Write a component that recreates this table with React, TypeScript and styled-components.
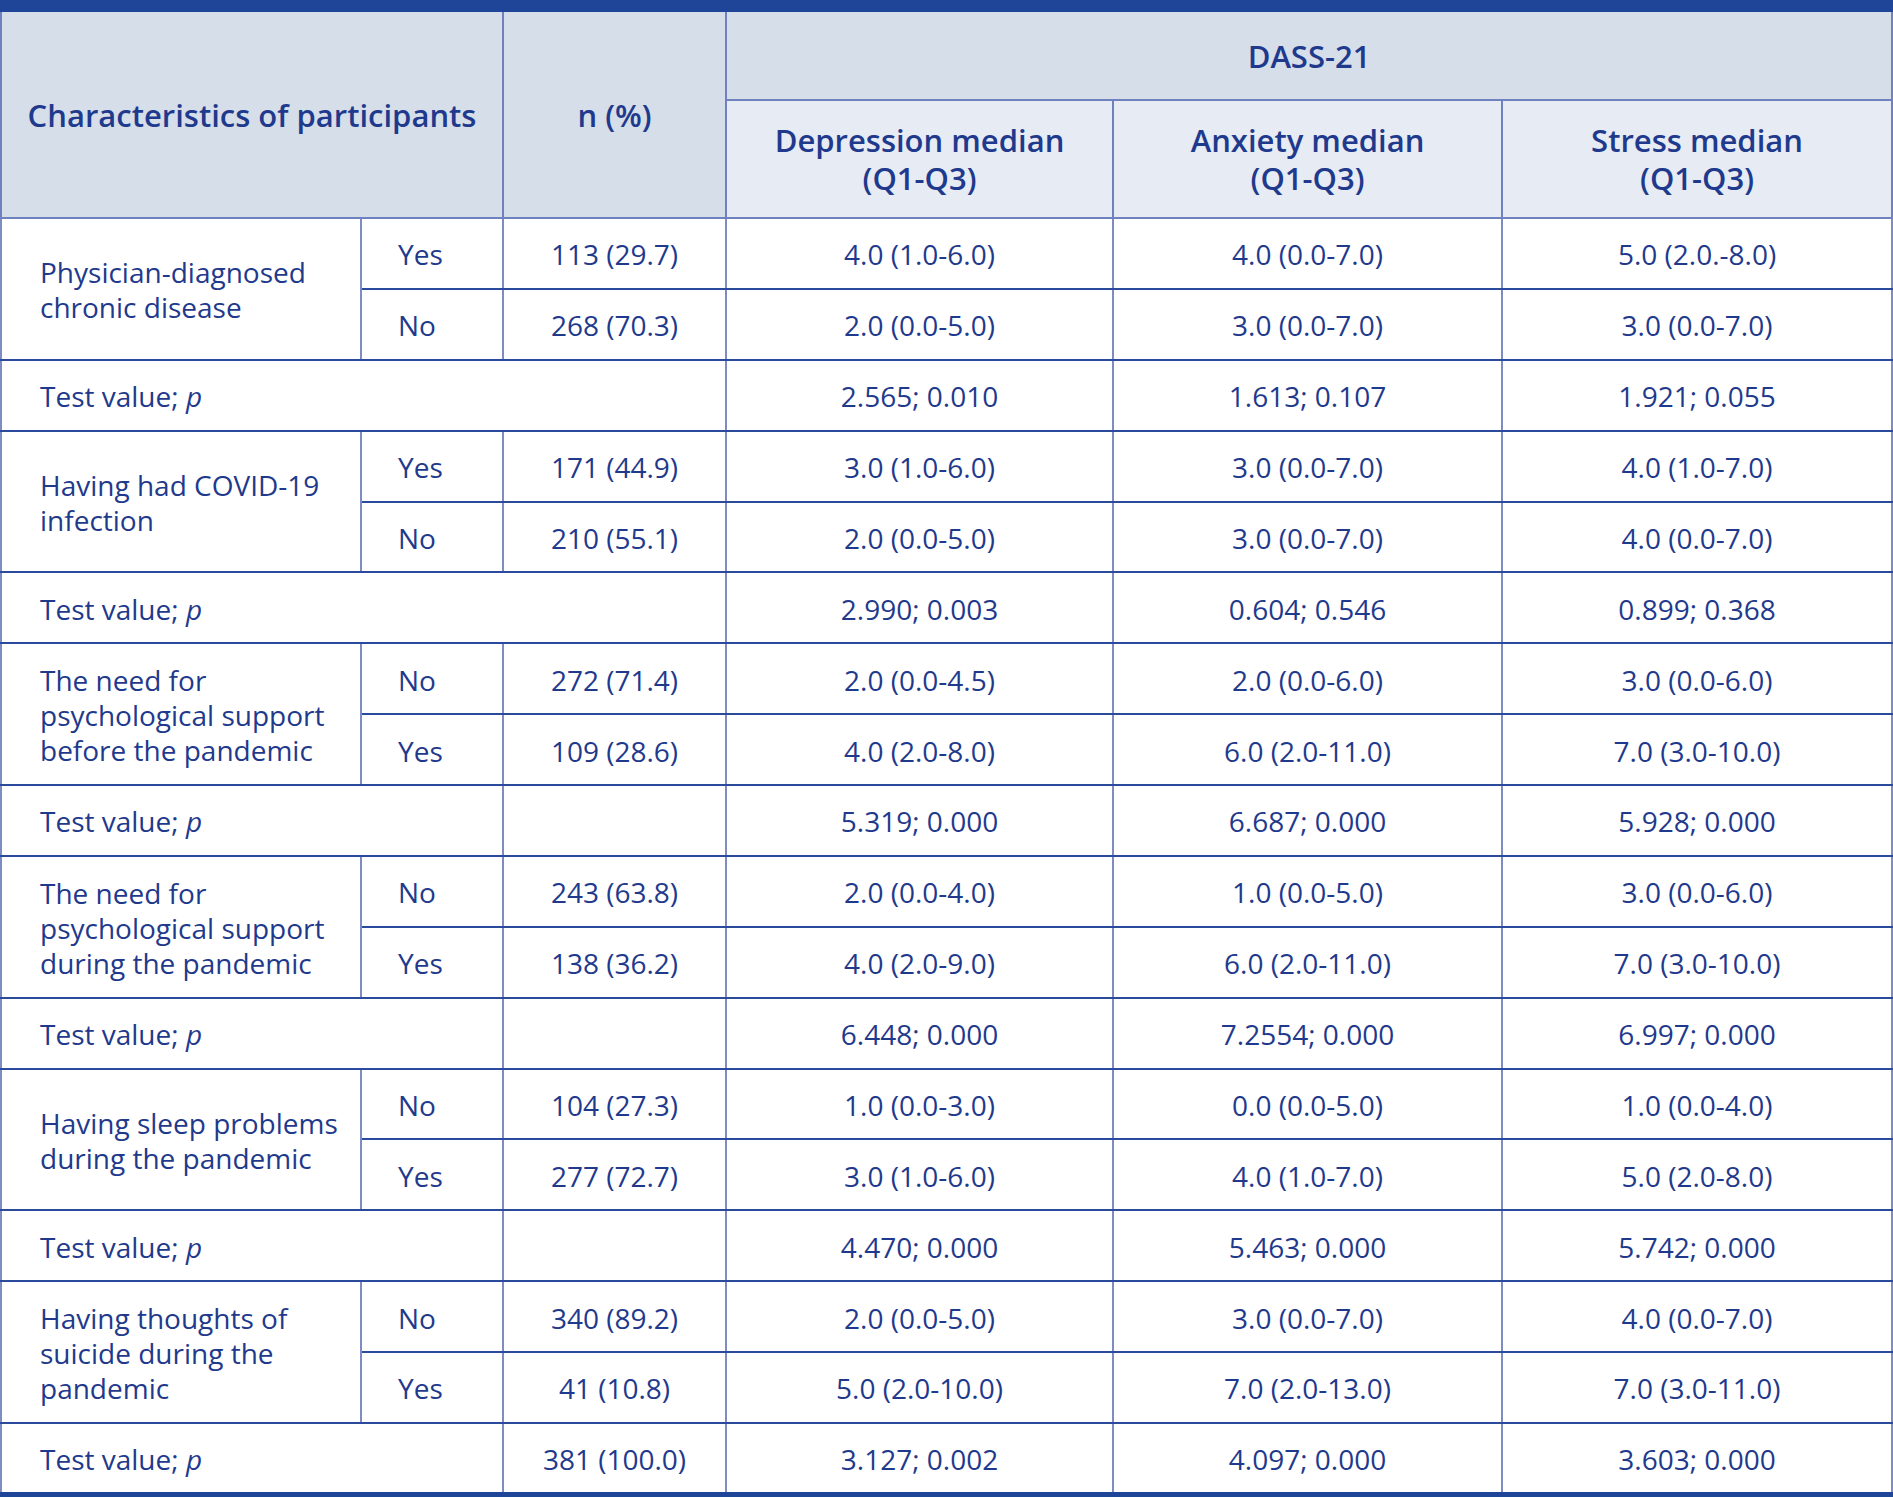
import React from "react";
import styled, { createGlobalStyle } from "styled-components";

const Global = createGlobalStyle`
  html, body { margin: 0; padding: 0; background: #ffffff; }
  body { font-family: "Open Sans", "Noto Sans", sans-serif; }
`;

const INK = "#1f3a8c";
const HLINE = "#2a4a9e";
const VLINE = "#7d8cc2";
const HEADLINE = "#6f82bf";

const Table = styled.table`
  width: 1891px;
  border-collapse: collapse;
  table-layout: fixed;
  color: ${INK};
  border-left: 2px solid ${VLINE};
  border-right: 2px solid ${VLINE};
`;

const HeadCell = styled.th<{ $sub?: boolean; $top?: boolean }>`
  font-weight: 600;
  font-size: 31px;
  line-height: 38px;
  text-align: center;
  vertical-align: middle;
  padding: 0 10px;
  background: ${(p) => (p.$sub ? "#e6ebf4" : "#d6deea")};
  border-left: 2px solid ${HEADLINE};
  border-right: 2px solid ${HEADLINE};
  border-bottom: 2px solid ${HEADLINE};
  border-top: ${(p) => (p.$top ? "12px solid #1f4599" : `2px solid ${HEADLINE}`)};
`;

const HeadRow = styled.tr<{ $h: number }>`
  height: ${(p) => p.$h}px;
`;

const BodyRow = styled.tr<{ $last?: boolean }>`
  height: ${(p) => (p.$last ? 72 : 70.88)}px;
  & > td {
    border-bottom: ${(p) => (p.$last ? "5px solid #1f4599" : `2px solid ${HLINE}`)};
  }
`;

const Cell = styled.td<{ $align?: "left" | "center"; $pad?: number }>`
  font-size: 28px;
  line-height: 35px;
  font-weight: 400;
  text-align: ${(p) => p.$align ?? "center"};
  vertical-align: middle;
  padding: 3px ${(p) => (p.$align === "left" ? 10 : 6)}px 0 ${(p) => (p.$align === "left" ? p.$pad ?? 38 : 6)}px;
  border-top: 2px solid ${HLINE};
  border-bottom: 2px solid ${HLINE};
  border-left: 2px solid ${VLINE};
  border-right: 2px solid ${VLINE};
  white-space: nowrap;
`;

const P = styled.i`
  font-style: italic;
`;

type Group = {
  label: React.ReactNode;
  rows: { a: string; n: string; d: string; x: string; s: string }[];
  test: { n?: string; d: string; x: string; s: string; wide?: boolean };
};

const groups: Group[] = [
  {
    label: (
      <>
        Physician-diagnosed
        <br />
        chronic disease
      </>
    ),
    rows: [
      { a: "Yes", n: "113 (29.7)", d: "4.0 (1.0-6.0)", x: "4.0 (0.0-7.0)", s: "5.0 (2.0.-8.0)" },
      { a: "No", n: "268 (70.3)", d: "2.0 (0.0-5.0)", x: "3.0 (0.0-7.0)", s: "3.0 (0.0-7.0)" },
    ],
    test: { d: "2.565; 0.010", x: "1.613; 0.107", s: "1.921; 0.055", wide: true },
  },
  {
    label: (
      <>
        Having had COVID-19
        <br />
        infection
      </>
    ),
    rows: [
      { a: "Yes", n: "171 (44.9)", d: "3.0 (1.0-6.0)", x: "3.0 (0.0-7.0)", s: "4.0 (1.0-7.0)" },
      { a: "No", n: "210 (55.1)", d: "2.0 (0.0-5.0)", x: "3.0 (0.0-7.0)", s: "4.0 (0.0-7.0)" },
    ],
    test: { d: "2.990; 0.003", x: "0.604; 0.546", s: "0.899; 0.368", wide: true },
  },
  {
    label: (
      <>
        The need for
        <br />
        psychological support
        <br />
        before the pandemic
      </>
    ),
    rows: [
      { a: "No", n: "272 (71.4)", d: "2.0 (0.0-4.5)", x: "2.0 (0.0-6.0)", s: "3.0 (0.0-6.0)" },
      { a: "Yes", n: "109 (28.6)", d: "4.0 (2.0-8.0)", x: "6.0 (2.0-11.0)", s: "7.0 (3.0-10.0)" },
    ],
    test: { n: "", d: "5.319; 0.000", x: "6.687; 0.000", s: "5.928; 0.000" },
  },
  {
    label: (
      <>
        The need for
        <br />
        psychological support
        <br />
        during the pandemic
      </>
    ),
    rows: [
      { a: "No", n: "243 (63.8)", d: "2.0 (0.0-4.0)", x: "1.0 (0.0-5.0)", s: "3.0 (0.0-6.0)" },
      { a: "Yes", n: "138 (36.2)", d: "4.0 (2.0-9.0)", x: "6.0 (2.0-11.0)", s: "7.0 (3.0-10.0)" },
    ],
    test: { n: "", d: "6.448; 0.000", x: "7.2554; 0.000", s: "6.997; 0.000" },
  },
  {
    label: (
      <>
        Having sleep problems
        <br />
        during the pandemic
      </>
    ),
    rows: [
      { a: "No", n: "104 (27.3)", d: "1.0 (0.0-3.0)", x: "0.0 (0.0-5.0)", s: "1.0 (0.0-4.0)" },
      { a: "Yes", n: "277 (72.7)", d: "3.0 (1.0-6.0)", x: "4.0 (1.0-7.0)", s: "5.0 (2.0-8.0)" },
    ],
    test: { n: "", d: "4.470; 0.000", x: "5.463; 0.000", s: "5.742; 0.000" },
  },
  {
    label: (
      <>
        Having thoughts of
        <br />
        suicide during the
        <br />
        pandemic
      </>
    ),
    rows: [
      { a: "No", n: "340 (89.2)", d: "2.0 (0.0-5.0)", x: "3.0 (0.0-7.0)", s: "4.0 (0.0-7.0)" },
      { a: "Yes", n: "41 (10.8)", d: "5.0 (2.0-10.0)", x: "7.0 (2.0-13.0)", s: "7.0 (3.0-11.0)" },
    ],
    test: { n: "381 (100.0)", d: "3.127; 0.002", x: "4.097; 0.000", s: "3.603; 0.000" },
  },
];

export default function App() {
  return (
    <>
      <Global />
      <Table>
        <colgroup>
          <col style={{ width: 360 }} />
          <col style={{ width: 142 }} />
          <col style={{ width: 223 }} />
          <col style={{ width: 387 }} />
          <col style={{ width: 389 }} />
          <col style={{ width: 390 }} />
        </colgroup>
        <thead>
          <HeadRow $h={94}>
            <HeadCell $top colSpan={2} rowSpan={2}>
              Characteristics of participants
            </HeadCell>
            <HeadCell $top rowSpan={2}>
              n (%)
            </HeadCell>
            <HeadCell $top colSpan={3}>
              DASS-21
            </HeadCell>
          </HeadRow>
          <HeadRow $h={118}>
            <HeadCell $sub>
              Depression median
              <br />
              (Q1-Q3)
            </HeadCell>
            <HeadCell $sub>
              Anxiety median
              <br />
              (Q1-Q3)
            </HeadCell>
            <HeadCell $sub>
              Stress median
              <br />
              (Q1-Q3)
            </HeadCell>
          </HeadRow>
        </thead>
        <tbody>
          {groups.map((g, gi) => {
            const last = gi === groups.length - 1;
            return (
              <React.Fragment key={gi}>
                {g.rows.map((r, ri) => (
                  <BodyRow key={ri}>
                    {ri === 0 && (
                      <Cell $align="left" rowSpan={2}>
                        {g.label}
                      </Cell>
                    )}
                    <Cell $align="left" $pad={36}>
                      {r.a}
                    </Cell>
                    <Cell>{r.n}</Cell>
                    <Cell>{r.d}</Cell>
                    <Cell>{r.x}</Cell>
                    <Cell>{r.s}</Cell>
                  </BodyRow>
                ))}
                <BodyRow $last={last}>
                  <Cell $align="left" colSpan={g.test.wide ? 3 : 2}>
                    Test value; <P>p</P>
                  </Cell>
                  {!g.test.wide && <Cell>{g.test.n}</Cell>}
                  <Cell>{g.test.d}</Cell>
                  <Cell>{g.test.x}</Cell>
                  <Cell>{g.test.s}</Cell>
                </BodyRow>
              </React.Fragment>
            );
          })}
        </tbody>
      </Table>
    </>
  );
}
